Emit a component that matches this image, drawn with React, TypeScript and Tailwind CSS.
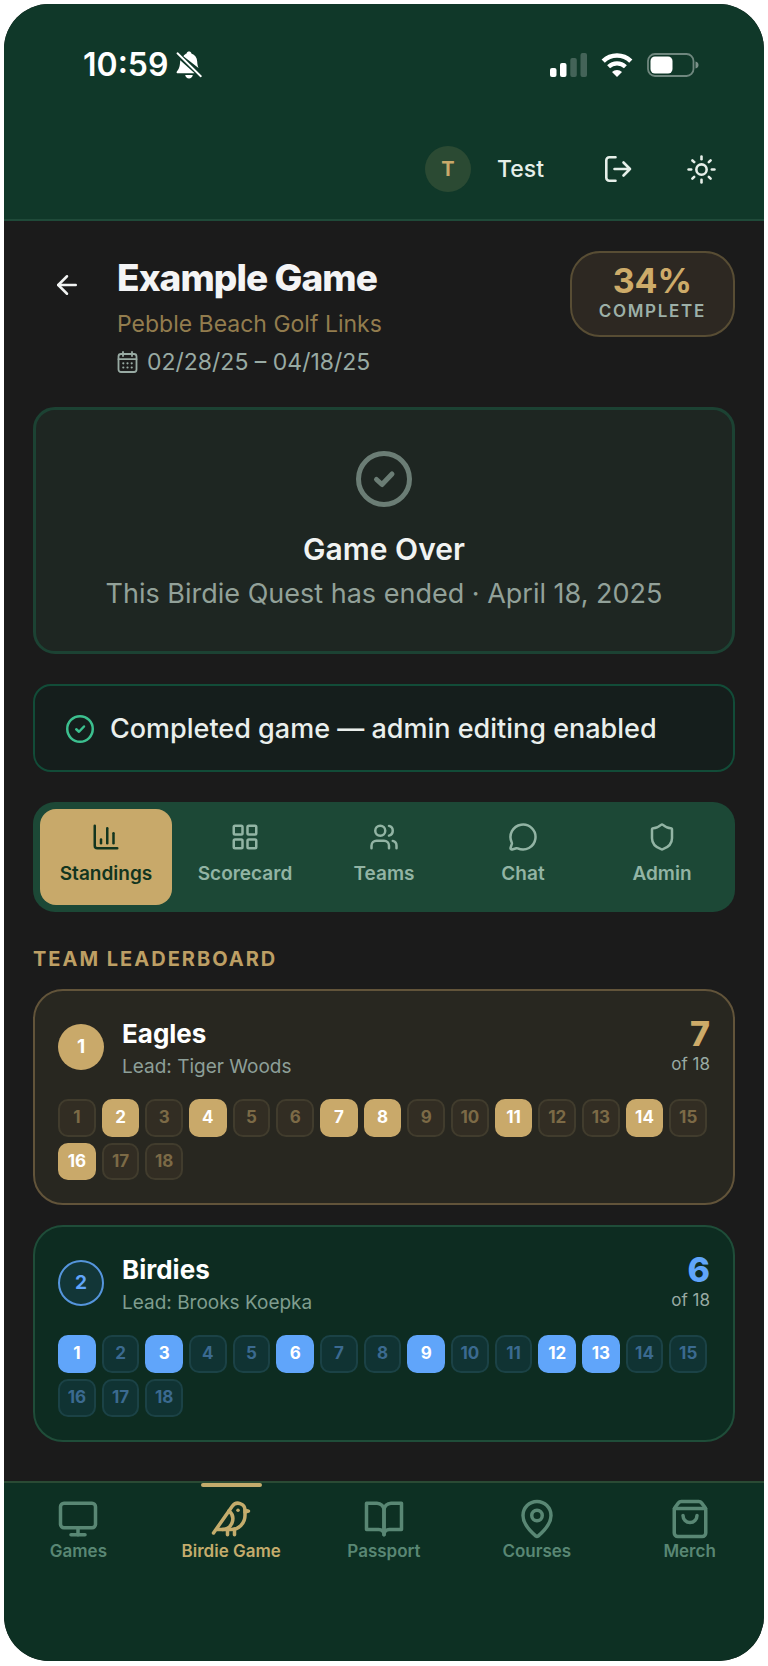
import { useState } from "react";
import type { ReactNode } from "react";
import { clsx } from "clsx";
import {
  ArrowLeft,
  Bird,
  ChartColumn,
  LayoutGrid,
  MapPin,
  MessageCircle,
  Monitor,
  Shield,
  ShoppingBag,
  Sun,
  Users,
} from "lucide-react";

const HOLES = Array.from({ length: 18 }, (_, i) => i + 1);

const TABS = [
  { name: "Standings", icon: ChartColumn },
  { name: "Scorecard", icon: LayoutGrid },
  { name: "Teams", icon: Users },
  { name: "Chat", icon: MessageCircle },
  { name: "Admin", icon: Shield },
];

const NAV = [
  { name: "Games", icon: Monitor },
  { name: "Birdie Game", icon: Bird, active: true },
  { name: "Passport", icon: BookIcon },
  { name: "Courses", icon: MapPin },
  { name: "Merch", icon: ShoppingBag },
];

const TEAMS = [
  { rank: 1, name: "Eagles", lead: "Tiger Woods", birdies: [2, 4, 7, 8, 11, 14, 16] },
  { rank: 2, name: "Birdies", lead: "Brooks Koepka", birdies: [1, 3, 6, 9, 12, 13] },
];

function BookIcon({ size = 24, strokeWidth = 2 }: { size?: number; strokeWidth?: number }) {
  return (
    <svg width={size} height={size} viewBox="0 0 24 24" fill="none" stroke="currentColor" strokeWidth={strokeWidth} strokeLinecap="round" strokeLinejoin="round">
      <path d="M2 3h6a4 4 0 0 1 4 4v14a3 3 0 0 0-3-3H2z" />
      <path d="M22 3h-6a4 4 0 0 0-4 4v14a3 3 0 0 1 3-3h7z" />
    </svg>
  );
}

function CheckCircle({ className }: { className?: string }) {
  return (
    <svg className={className} viewBox="0 0 56 56" fill="none" stroke="currentColor" strokeWidth="5" strokeLinecap="round" strokeLinejoin="round">
      <circle cx="28" cy="28" r="25.5" />
      <path d="m20.5 28.500 5.500 5 10-10.500" />
    </svg>
  );
}

function StatusBar() {
  return (
    <div className="flex h-12 items-center justify-between pr-[65px] pl-[79px] text-white">
      <div className="flex items-center gap-2">
        <span className="text-[32px] leading-10 font-semibold">10:59</span>
        <svg className="h-7 w-[26px]" viewBox="0 0 26 28" fill="currentColor">
          <path d="M4.2 9.2 18.6 22.3H1.6c-1 0-1.3-1-.7-1.8C3 17.9 4 15.500 4.200 9.200z" />
          <path d="M7.400 5.200C8.500 3.700 9.600 3 10.600 2.600 10.900 1.200 11.800.6 13 .6s2.100.6 2.400 2c3.500 1.200 5.700 4 5.800 7.900.1 2.700.5 4.500 1.300 6.600z" />
          <path d="M9.200 24h7.600c-.4 2.200-1.900 3.500-3.800 3.500S9.600 26.200 9.200 24z" />
          <path d="m1.500 2.300 23.300 22.900" stroke="currentColor" strokeWidth="1.900" strokeLinecap="round" fill="none" />
        </svg>
      </div>
      <div className="flex items-center gap-[14px]">
        <svg className="h-6 w-[37px]" viewBox="0 0 37 24" fill="currentColor">
          <rect x="0" y="15" width="6.500" height="9" rx="2" />
          <rect x="10" y="10" width="6.500" height="14" rx="2" />
          <rect x="20.300" y="5" width="6.500" height="19" rx="2" opacity=".22" />
          <rect x="30.500" y="0" width="6.500" height="24" rx="2" opacity=".22" />
        </svg>
        <svg className="h-6 w-8" viewBox="0 0 32 24" fill="none" stroke="currentColor">
          <path d="M2.200 8.100a19.800 19.800 0 0 1 27.600 0" strokeWidth="4.600" />
          <path d="M7.600 13.700a12.200 12.200 0 0 1 16.800 0" strokeWidth="4.200" />
          <path d="m16 24-5-5a7.200 7.200 0 0 1 10 0z" fill="currentColor" stroke="none" />
        </svg>
        <svg className="h-6 w-[52px]" viewBox="0 0 52 24" fill="currentColor">
          <rect x="1" y="1" width="45.500" height="22" rx="7" fill="none" stroke="currentColor" strokeWidth="1.800" opacity=".4" />
          <rect x="3.500" y="3.500" width="22" height="17" rx="4.500" />
          <path d="M48.500 8.500c2 .5 3 1.800 3 3.500s-1 3-3 3.500z" opacity=".45" />
        </svg>
      </div>
    </div>
  );
}

function Header() {
  return (
    <header className="border-b-2 border-[#1f4a39] bg-[#103829] pt-[37px] pb-[26px]">
      <StatusBar />
      <div className="mt-14 flex h-12 items-center justify-end pr-[47px] text-[#e6efe9]">
        <a href="#profile" className="flex items-center gap-[26px]">
          <span className="flex size-[46px] items-center justify-center rounded-full bg-[#2b4a33] text-xl font-bold text-[#c9a96a]">
            T
          </span>
          <span className="text-[23px] font-medium">Test</span>
        </a>
        <button type="button" aria-label="Log out" className="ml-[61px]">
          <svg className="h-[26px] w-[27px]" viewBox="0 0 27 26" fill="none" stroke="currentColor" strokeWidth="2.600" strokeLinecap="round" strokeLinejoin="round">
            <path d="M10.500 1.300H4.300a3 3 0 0 0-3 3v17.400a3 3 0 0 0 3 3h6.200" />
            <path d="M9.500 13h15.500M18.500 6.500 25 13l-6.500 6.500" />
          </svg>
        </button>
        <button type="button" aria-label="Toggle theme" className="ml-[54px]">
          <Sun size={31} strokeWidth={2} />
        </button>
      </div>
    </header>
  );
}

function GameHeading() {
  return (
    <div className="flex items-start">
      <button type="button" aria-label="Back" className="mr-4 flex size-17 items-center justify-center text-[#f1f3f2]">
        <ArrowLeft size={30} strokeWidth={2} />
      </button>
      <div className="flex-1">
        <h1 className="text-[37px] leading-[54px] font-extrabold tracking-tight text-[#f4f4f5]">Example Game</h1>
        <p className="text-[23px] leading-[38px] text-[#937d4e]">Pebble Beach Golf Links</p>
        <p className="flex items-center gap-[9px] text-[23px] leading-[38px] text-[#98aaa3]">
          <svg className="h-[22px] w-[21px]" viewBox="0 0 21 22" fill="none" stroke="currentColor" strokeWidth="1.800" strokeLinecap="round">
            <rect x="1.500" y="3" width="18" height="18" rx="2.500" />
            <path d="M1.500 8.200h18M6 1v4M15 1v4" />
            <path d="M6.300 12.300h.01M10.500 12.300h.01M14.700 12.300h.01M6.300 16.500h.01M10.500 16.500h.01M14.700 16.500h.01" strokeWidth="2.200" />
          </svg>
          02/28/25 – 04/18/25
        </p>
      </div>
      <div className="flex flex-col items-center rounded-[30px] border-2 border-[#584d34] bg-[#2d2822] px-[27px] pt-[10px] pb-3">
        <span className="text-[34px] leading-9 font-bold text-[#cdab69]">34%</span>
        <span className="text-[17px] leading-6 font-semibold tracking-widest text-[#9db0a8]">COMPLETE</span>
      </div>
    </div>
  );
}

function Tabs() {
  const [active, setActive] = useState("Standings");
  return (
    <div role="tablist" className="mt-[30px] grid grid-cols-5 gap-[7px] rounded-[22px] bg-[#1c4836] p-[7px]">
      {TABS.map(({ name, icon: Icon }) => (
        <button
          key={name}
          type="button"
          role="tab"
          aria-selected={active === name}
          onClick={() => setActive(name)}
          className={clsx(
            "flex flex-col items-center gap-[10px] rounded-2xl pt-[13px] pb-[19px] text-[19px] leading-6 font-semibold",
            active === name ? "bg-[#c8a96a] text-[#12351f]" : "text-[#92b4a4]"
          )}
        >
          <Icon size={30} strokeWidth={2} />
          {name}
        </button>
      ))}
    </div>
  );
}

function TeamCard({ team }: { team: (typeof TEAMS)[number] }) {
  const first = team.rank === 1;
  return (
    <article
      className={clsx(
        "rounded-[30px] border-2 p-[23px]",
        first ? "border-[#62543a] bg-[#282720]" : "border-[#1f4d39] bg-[#0d2c21]"
      )}
    >
      <div className="flex items-center gap-[18px]">
        <span
          className={clsx(
            "flex size-[46px] items-center justify-center rounded-full text-[19px] font-bold",
            first ? "bg-[#c9a96a] text-white" : "border-2 border-[#5595dc] bg-[#123637] text-[#60a5fa]"
          )}
        >
          {team.rank}
        </span>
        <div className="flex-1">
          <h3 className="text-[26px] leading-10 font-bold text-white">{team.name}</h3>
          <p className={clsx("text-[19px] leading-[26px]", first ? "text-[#8d9f98]" : "text-[#7f9d8f]")}>Lead: {team.lead}</p>
        </div>
        <div className="self-start text-right">
          <p className={clsx("text-[34px] leading-10 font-extrabold", first ? "text-[#cdab69]" : "text-[#60a5fa]")}>
            {team.birdies.length}
          </p>
          <p className="text-[17px] leading-5 text-[#98aaa3]">of 18</p>
        </div>
      </div>
      <ul className="mt-[19px] grid grid-cols-15 gap-[6px] pr-[3px]">
        {HOLES.map((hole) => {
          const made = team.birdies.includes(hole);
          return (
            <li
              key={hole}
              className={clsx(
                "flex aspect-square items-center justify-center rounded-[10px] border-2 pb-[2px] text-[17px] leading-5 font-bold",
                made && first && "border-[#c9a96a] bg-[#c9a96a] text-white",
                made && !first && "border-[#60a5fa] bg-[#60a5fa] text-white",
                !made && first && "border-[#413c2d] bg-[#322d23] text-[#7c6a46]",
                !made && !first && "border-[#1b4246] bg-[#103333] text-[#3b6a90]"
              )}
            >
              {hole}
            </li>
          );
        })}
      </ul>
    </article>
  );
}

function NavItem({ name, active, children }: { name: string; active?: boolean; children: ReactNode }) {
  return (
    <a
      href="#nav"
      className={clsx(
        "relative flex flex-col items-center gap-px pt-[15px] text-[17px] leading-5 font-semibold",
        active ? "text-[#c4ac6c]" : "text-[#598774]"
      )}
    >
      {active && <span className="absolute top-0 h-1 w-[61px] rounded-full bg-[#c4ac6c]" />}
      {children}
      {name}
    </a>
  );
}

export default function App() {
  return (
    <div className="min-h-screen bg-white px-1 pt-1 pb-[5px] font-['Inter',sans-serif]">
      <div className="overflow-hidden rounded-[45px] bg-[#1b1b1b]">
        <Header />

        <main className="px-[29px] pt-[30px] pb-[39px]">
          <GameHeading />

          <section className="mt-[26px] flex flex-col items-center rounded-[22px] border-3 border-[#1c4233] bg-[#1e2622] pt-[41px] pb-[35px] text-center">
            <CheckCircle className="size-14 text-[#6b7d75]" />
            <h2 className="mt-[19px] text-[30px] leading-[46px] font-semibold text-[#f1f3f2]">Game Over</h2>
            <p className="text-[27px] leading-11 text-[#92a199]">This Birdie Quest has ended · April 18, 2025</p>
          </section>

          <div role="status" className="mt-[30px] flex items-center gap-4 rounded-[18px] border-2 border-[#124c38] bg-[#151e1c] px-[31px] pt-[23px] pb-[21px]">
            <CheckCircle className="size-7 text-[#3cc08f]" />
            <span className="text-[27px] leading-10 font-medium text-[#eaefec]">Completed game — admin editing enabled</span>
          </div>

          <Tabs />

          <section className="mt-[31px]">
            <h2 className="text-xl leading-8 font-bold tracking-widest text-[#bd9f64]">TEAM LEADERBOARD</h2>
            <div className="mt-[14px] flex flex-col gap-5">
              {TEAMS.map((team) => (
                <TeamCard key={team.rank} team={team} />
              ))}
            </div>
          </section>
        </main>

        <nav className="border-t-2 border-[#2a4a34] bg-[#0d3023] pb-[100px]">
          <div className="-mx-[2px] grid grid-cols-5">
            {NAV.map(({ name, icon: Icon, active }) => (
              <NavItem key={name} name={name} active={active}>
                <Icon size={42} strokeWidth={2} />
              </NavItem>
            ))}
          </div>
        </nav>
      </div>
    </div>
  );
}
